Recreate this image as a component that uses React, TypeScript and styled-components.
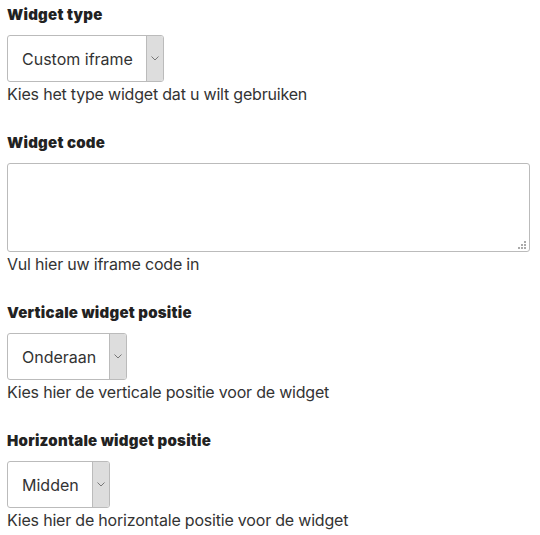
import styled, { createGlobalStyle } from 'styled-components'

const GlobalStyle = createGlobalStyle`
  html, body {
    margin: 0;
    padding: 0;
    background: #ffffff;
  }
  body {
    font-family: Inter, Roboto, "Liberation Sans", sans-serif;
    color: #333333;
  }
`

const Form = styled.form`
  display: flex;
  flex-direction: column;
  padding: 3px 10px 0 7px;
`

const Field = styled.div`
  display: flex;
  flex-direction: column;
  align-items: flex-start;
  margin-bottom: 25px;
`

const Label = styled.label`
  display: block;
  font-size: 15px;
  font-weight: 900;
  letter-spacing: 0.25px;
  line-height: 24px;
  color: #222222;
  margin-bottom: 8px;
`

const Help = styled.p`
  margin: 0;
  font-size: 16px;
  letter-spacing: -0.2px;
  line-height: 24px;
  color: #333333;
`

const SelectBox = styled.div`
  display: flex;
  height: 47px;
  box-sizing: border-box;
  border: 1px solid #bbbbbb;
  border-radius: 3px;
  background: #ffffff;
  overflow: hidden;
`

const SelectValue = styled.span`
  display: flex;
  align-items: center;
  padding: 0 13px 0 14px;
  font-size: 16px;
  color: #333333;
  white-space: nowrap;
`

const SelectArrow = styled.span`
  display: flex;
  align-items: center;
  justify-content: center;
  width: 16px;
  background: #dddddd;
  border-left: 1px solid #bbbbbb;
  color: #666666;
`

const AreaWrap = styled.div`
  position: relative;
  width: 100%;
`

const Area = styled.textarea`
  display: block;
  width: 100%;
  height: 89px;
  box-sizing: border-box;
  border: 1px solid #bbbbbb;
  border-radius: 3px;
  background: #ffffff;
  resize: none;
  font-family: inherit;
  font-size: 16px;
  outline: none;
`

const Grip = styled.svg`
  position: absolute;
  right: 4px;
  bottom: 3px;
`

function Chevron() {
  return (
    <svg width="8" height="5" viewBox="0 0 8 5" fill="none">
      <path d="M0.5 0.5 L4 4 L7.5 0.5" stroke="#777" strokeWidth="1" />
    </svg>
  )
}

type SelectProps = { value: string }

function Select({ value }: SelectProps) {
  return (
    <SelectBox>
      <SelectValue>{value}</SelectValue>
      <SelectArrow>
        <Chevron />
      </SelectArrow>
    </SelectBox>
  )
}

export default function App() {
  return (
    <>
      <GlobalStyle />
      <Form>
        <Field>
          <Label>Widget type</Label>
          <Select value="Custom iframe" />
          <Help>Kies het type widget dat u wilt gebruiken</Help>
        </Field>
        <Field>
          <Label>Widget code</Label>
          <AreaWrap>
            <Area />
            <Grip width="9" height="9" viewBox="0 0 9 9">
              <g fill="#aaaaaa">
                <rect x="7" y="1" width="2" height="2" />
                <rect x="4" y="4" width="2" height="2" />
                <rect x="7" y="4" width="2" height="2" />
                <rect x="1" y="7" width="2" height="2" />
                <rect x="4" y="7" width="2" height="2" />
                <rect x="7" y="7" width="2" height="2" />
              </g>
            </Grip>
          </AreaWrap>
          <Help>Vul hier uw iframe code in</Help>
        </Field>
        <Field>
          <Label>Verticale widget positie</Label>
          <Select value="Onderaan" />
          <Help>Kies hier de verticale positie voor de widget</Help>
        </Field>
        <Field>
          <Label>Horizontale widget positie</Label>
          <Select value="Midden" />
          <Help>Kies hier de horizontale positie voor de widget</Help>
        </Field>
      </Form>
    </>
  )
}
